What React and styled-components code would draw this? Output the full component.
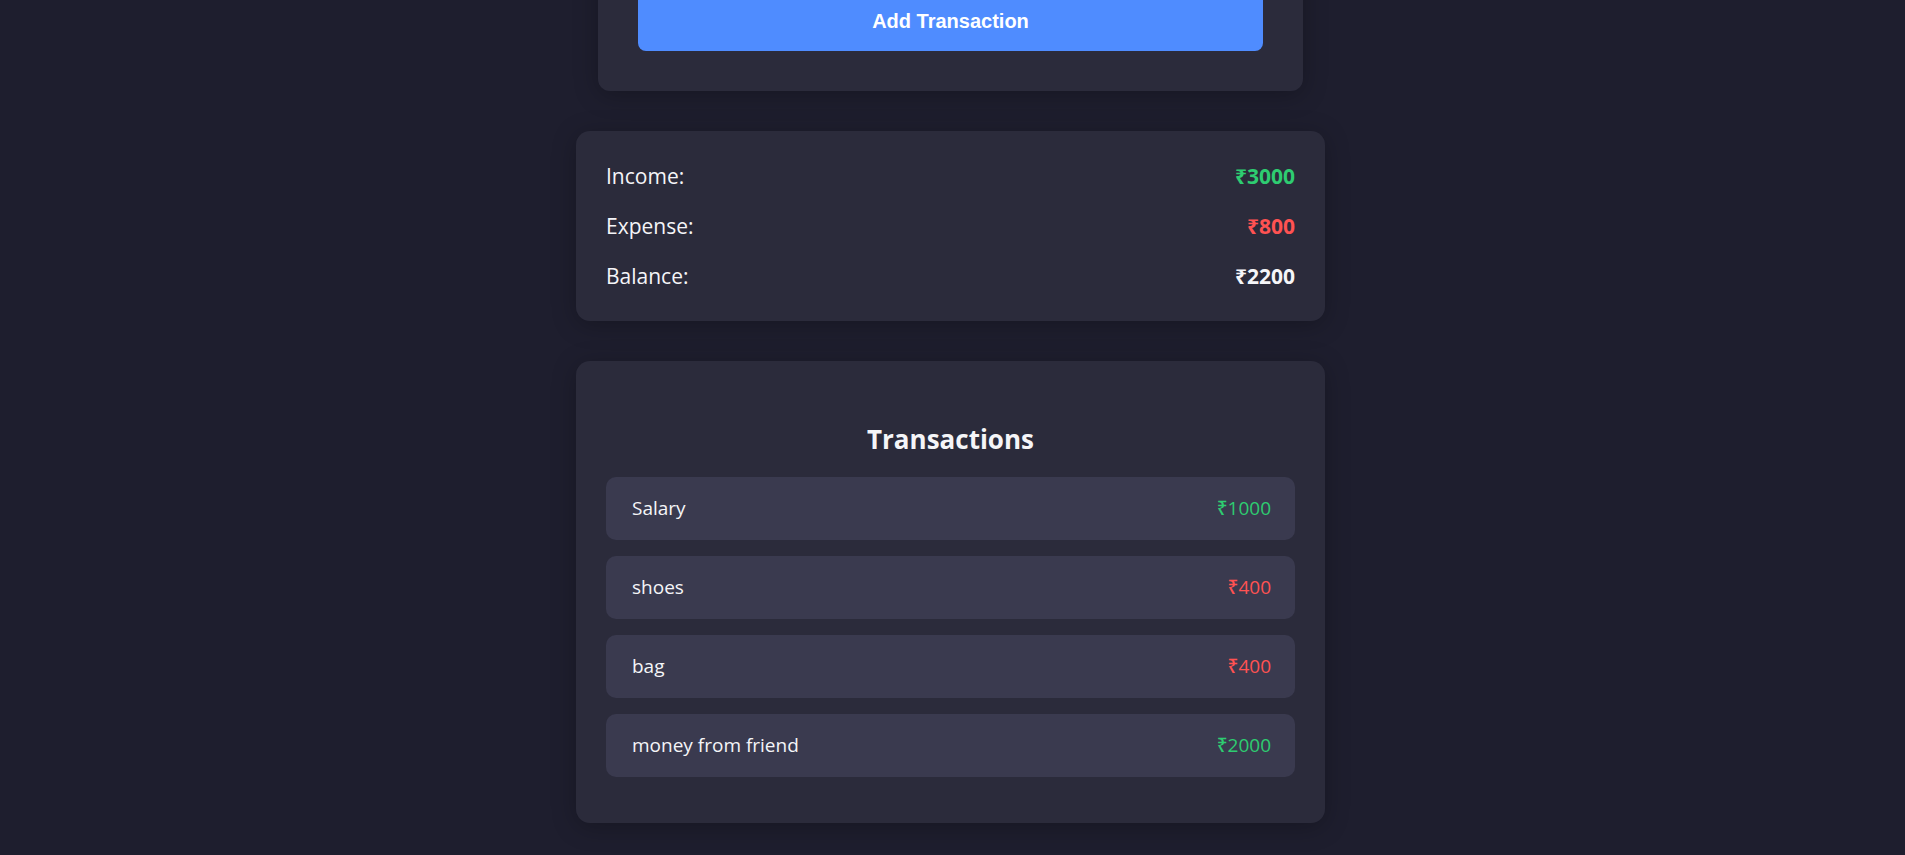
import React, { useLayoutEffect } from 'react';
import styled, { createGlobalStyle } from 'styled-components';

const transactions = [
  { id: 1, text: 'Salary', amount: 1000 },
  { id: 2, text: 'shoes', amount: -400 },
  { id: 3, text: 'bag', amount: -400 },
  { id: 4, text: 'money from friend', amount: 2000 },
];

const GlobalStyle = createGlobalStyle`
  html {
    overflow-y: scroll;
  }
  html::-webkit-scrollbar {
    width: 4px;
    background: #2c2c2c;
  }
  html::-webkit-scrollbar-thumb {
    background: #2c2c2c;
  }
  body {
    margin: 0;
    background: #1e1e2e;
    color: #f5f5f8;
    font-family: "Open Sans", "Noto Sans", sans-serif;
  }
  * {
    box-sizing: border-box;
  }
`;

const Page = styled.div`
  display: flex;
  flex-direction: column;
  align-items: center;
  padding: 40px 24px 32px 20px;
`;

const Title = styled.h1`
  margin: 0 0 40px;
  font-size: 34px;
  font-weight: 700;
`;

const Card = styled.div`
  width: ${(p) => p.width}px;
  background: #2b2b3b;
  border-radius: ${(p) => p.radius || 14}px;
  box-shadow: 0 4px 24px rgba(0, 0, 0, 0.25);
  padding: ${(p) => p.pad};
  & + & {
    margin-top: 40px;
  }
`;

const Form = styled.form`
  display: flex;
  flex-direction: column;
  gap: 20px;
`;

const FormTitle = styled.h2`
  margin: 0;
  text-align: center;
  font-size: 26px;
`;

const Input = styled.input`
  width: 100%;
  padding: 16px 18px;
  font-size: 18px;
  font-family: inherit;
  color: #f5f5f8;
  background: #3a3a4f;
  border: none;
  border-radius: 8px;
  outline: none;
  &::placeholder {
    color: #a0a0b4;
  }
`;

const SubmitButton = styled.button`
  width: 100%;
  padding: 18px;
  border: none;
  border-radius: 8px;
  background: #4f8cff;
  color: #fff;
  font-family: "Liberation Sans", Arial, sans-serif;
  font-size: 20px;
  font-weight: 700;
  cursor: pointer;
`;

const SummaryRow = styled.div`
  display: flex;
  justify-content: space-between;
  align-items: center;
  padding: 10px 0;
  font-size: 21px;
  line-height: 30px;
`;

const Amount = styled.span`
  font-weight: ${(p) => (p.bold ? 700 : 500)};
  color: ${(p) => (p.tone === 'plus' ? '#2ecc71' : p.tone === 'minus' ? '#ff5252' : '#f5f5f8')};
`;

const ListTitle = styled.h2`
  margin: 30px 0 20px;
  text-align: center;
  font-size: 26px;
  font-weight: 700;
`;

const List = styled.ul`
  list-style: none;
  margin: 0;
  padding: 0;
`;

const Item = styled.li`
  display: flex;
  justify-content: space-between;
  align-items: center;
  padding: 18px 24px 18px 26px;
  margin-bottom: 16px;
  background: #3a3a4f;
  border-radius: 10px;
  font-size: 19px;
  line-height: 27px;
`;

const rupee = (n) => `₹${Math.abs(n)}`;

export default function App() {
  const income = transactions.filter((t) => t.amount > 0).reduce((s, t) => s + t.amount, 0);
  const expense = transactions.filter((t) => t.amount < 0).reduce((s, t) => s - t.amount, 0);

  useLayoutEffect(() => {
    window.scrollTo(0, document.documentElement.scrollHeight);
  }, []);

  return (
    <>
      <GlobalStyle />
      <Page>
        <Title>Expense Tracker</Title>
        <Card width={705} radius={12} pad="40px">
          <Form onSubmit={(e) => e.preventDefault()}>
            <FormTitle>New Transaction</FormTitle>
            <Input placeholder="Enter description" />
            <Input type="number" placeholder="Enter amount (+ income, - expense)" />
            <SubmitButton type="submit">Add Transaction</SubmitButton>
          </Form>
        </Card>
        <Card width={749} pad="20px 30px">
          <SummaryRow>
            <span>Income:</span>
            <Amount bold tone="plus">{rupee(income)}</Amount>
          </SummaryRow>
          <SummaryRow>
            <span>Expense:</span>
            <Amount bold tone="minus">{rupee(expense)}</Amount>
          </SummaryRow>
          <SummaryRow>
            <span>Balance:</span>
            <Amount bold>{rupee(income - expense)}</Amount>
          </SummaryRow>
        </Card>
        <Card width={749} pad="30px">
          <ListTitle>Transactions</ListTitle>
          <List>
            {transactions.map((t) => (
              <Item key={t.id}>
                <span>{t.text}</span>
                <Amount tone={t.amount > 0 ? 'plus' : 'minus'}>{rupee(t.amount)}</Amount>
              </Item>
            ))}
          </List>
        </Card>
      </Page>
    </>
  );
}
